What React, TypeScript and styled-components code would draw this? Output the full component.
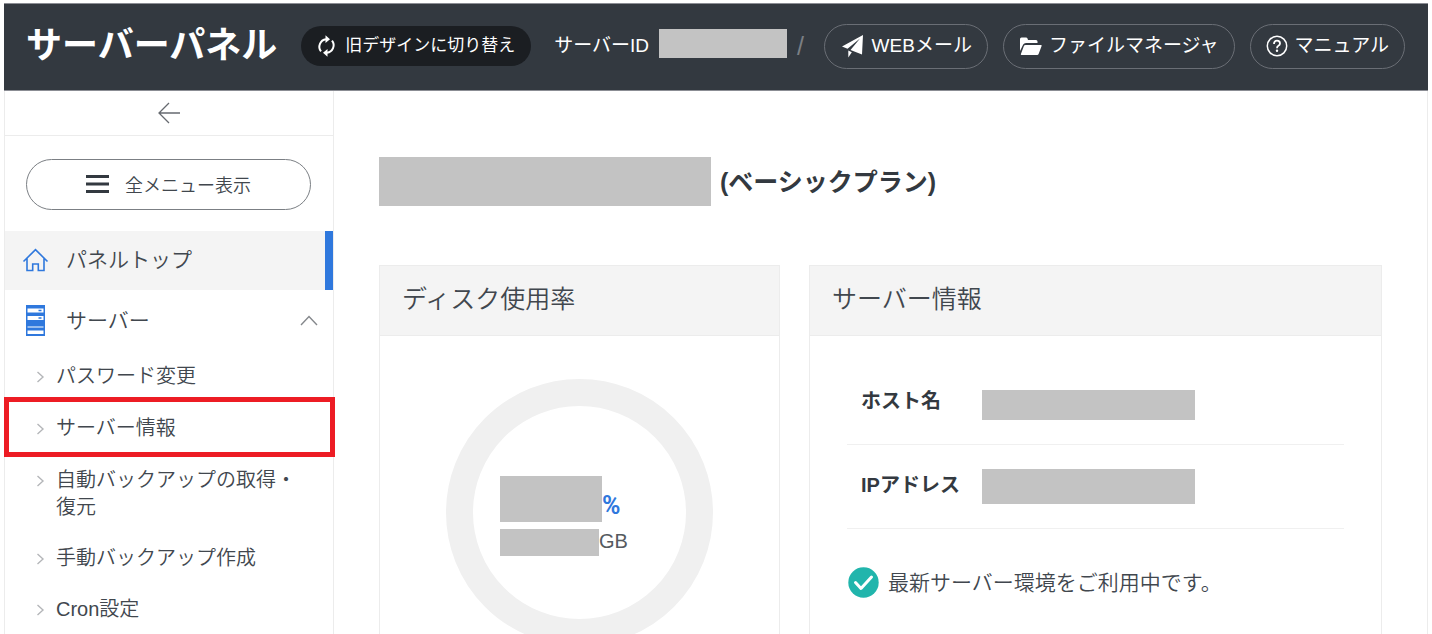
import React from "react";
import styled, { createGlobalStyle, css } from "styled-components";

const ink = "#333940";
const softInk = "#41474e";
const line = "#ececec";

const GlobalStyle = createGlobalStyle`
  *, *::before, *::after { box-sizing: border-box; }
  body {
    margin: 0;
    background: #fff;
    color: ${softInk};
    font-family: "Liberation Sans", "Noto Sans CJK JP", sans-serif;
    font-size: 20px;
    font-weight: 350;
  }
  button { font: inherit; color: inherit; cursor: pointer; }
  a { color: inherit; text-decoration: none; }
  h1, h2, p, ul { margin: 0; padding: 0; }
  ul { list-style: none; }
`;

const Page = styled.div`
  min-height: 100vh;
  padding: 3px 4px 0;
  display: flex;
  flex-direction: column;
`;

const Header = styled.header`
  min-height: 88px;
  display: flex;
  align-items: center;
  padding: 0 23px 2px 22px;
  background: #333940;
  border: 1px solid #8b8d94;
  border-width: 1px 0;
  color: #fff;
  font-size: 19px;
  line-height: 28px;
  font-weight: 400;
  white-space: nowrap;
`;

const Brand = styled.h1`
  font-size: 36px;
  line-height: 44px;
  font-weight: 700;
`;

const SwitchButton = styled.button`
  display: flex;
  align-items: center;
  gap: 9px;
  height: 40px;
  margin-left: 24px;
  padding: 0 16px;
  border: 0;
  border-radius: 20px;
  background: #1b1e22;
  font-size: 17px;
`;

const Mask = styled.span<{ $w: number; $h: number }>`
  display: block;
  flex: none;
  width: ${(p) => p.$w}px;
  height: ${(p) => p.$h}px;
  background: #c3c3c3;
`;

const ServerId = styled.div`
  display: flex;
  align-items: center;
  gap: 10px;
  margin-left: 23px;
  ${Mask} { margin-bottom: 5px; }
`;

const Slash = styled.span`
  color: #7b7f84;
  font-size: 25px;
`;

const HeaderNav = styled.nav`
  display: flex;
  gap: 15px;
  margin-left: auto;
`;

const HeaderLink = styled.a`
  display: flex;
  align-items: center;
  gap: 7px;
  height: 45px;
  padding: 0 15px;
  border: 1px solid #6a6e75;
  border-radius: 23px;
`;

const Body = styled.div`
  flex: 1;
  display: flex;
  border-right: 1px solid ${line};
`;

const Sidebar = styled.aside`
  flex: none;
  width: 330px;
  border: 1px solid ${line};
  border-width: 0 1px;
`;

const Collapse = styled.button`
  display: flex;
  align-items: center;
  justify-content: center;
  width: 100%;
  height: 45px;
  padding: 0;
  background: none;
  border: 0;
  border-bottom: 1px solid ${line};
`;

const AllMenu = styled.button`
  display: flex;
  align-items: center;
  justify-content: center;
  gap: 16px;
  width: calc(100% - 43px);
  height: 51px;
  margin: 23px 22px 21px 21px;
  padding: 0 0 2px;
  border: 1px solid #7b7f84;
  border-radius: 26px;
  background: #fff;
  font-size: 18px;
`;

const MenuItem = styled.a<{ $active?: boolean }>`
  display: flex;
  align-items: center;
  gap: 17px;
  height: ${(p) => (p.$active ? 59 : 61)}px;
  padding: 0 15px 0 17px;
  font-size: 21px;
  line-height: 32px;
  ${(p) =>
    p.$active &&
    css`
      padding-bottom: 2px;
      background: #f4f4f4;
      border-right: 8px solid #2f78dd;
    `}
  & > span { flex: 1; }
`;

const SubLink = styled.a`
  display: flex;
  gap: 11px;
  padding: 0 30px 0 31px;
  line-height: 27px;
  & > svg { flex: none; margin-top: 8px; }
`;

const SubItem = styled.li<{ $marked?: boolean }>`
  padding: 12px 0;
  ${(p) =>
    p.$marked &&
    css`
      margin: -5px -2px -2px -1px;
      padding: 13px 0 10px;
      border: 5px solid #ed1c24;
      & > ${SubLink} { padding-left: 27px; }
    `}
`;

const Main = styled.main`
  flex: 1;
  min-width: 0;
  padding: 66px 45px 0;
`;

const PlanTitle = styled.h2`
  display: flex;
  align-items: center;
  gap: 9px;
  color: ${ink};
  font-size: 25px;
  line-height: 36px;
  font-weight: 700;
`;

const Cards = styled.div`
  display: grid;
  grid-template-columns: 401fr 573fr;
  gap: 29px;
  margin-top: 59px;
`;

const Card = styled.section`
  border: 1px solid ${line};
`;

const CardTitle = styled.h2`
  height: 70px;
  padding: 0 22px;
  background: #f4f4f4;
  border-bottom: 1px solid ${line};
  font-size: 25px;
  line-height: 66px;
  font-weight: 350;
`;

const Ring = styled.div`
  width: 267px;
  height: 267px;
  margin: 43px auto 40px;
  padding: 70px 27px 0;
  border: 27px solid #f0f0f0;
  border-radius: 50%;
`;

const Percent = styled.p`
  display: flex;
  align-items: flex-end;
  margin-bottom: 7px;
  color: #2f78dd;
  font-family: Roboto, sans-serif;
  font-size: 25px;
  font-weight: 700;
  line-height: 32px;
`;

const Capacity = styled.p`
  display: flex;
  align-items: flex-start;
  color: #555a60;
  font-size: 20px;
  line-height: 24px;
`;

const InfoTable = styled.table`
  width: calc(100% - 74px);
  margin: 24px 37px 0;
  border-collapse: collapse;
  tr { height: 84px; border-bottom: 1px solid #f0f0f0; }
  th {
    width: 135px;
    padding: 0 0 5px 14px;
    color: ${ink};
    text-align: left;
    font-weight: 700;
    white-space: nowrap;
  }
  td { padding: 0; }
  tr:first-child td { padding-top: 6px; }
`;

const Status = styled.p`
  display: flex;
  align-items: center;
  gap: 9px;
  margin: 38px 38px 0;
  font-size: 21px;
  line-height: 32px;
`;

const Refresh = () => (
  <svg width="19" height="22" viewBox="0 0 19 22" fill="none" stroke="#fff" strokeWidth="2">
    <path d="M4 16.300A7.500 7.500 0 0 1 9 4.200M15 5.700A7.500 7.500 0 0 1 10 17.800" />
    <path d="M8.500 .3v7.800L13 4.200zM10.500 13.900v7.800L6 17.800z" fill="#fff" stroke="none" />
  </svg>
);

const Plane = () => (
  <svg width="25" height="24" viewBox="0 0 25 24" fill="#fff">
    <path d="M23 1 2 12.500l5.500 2.300L20 4.500 10.500 16 22 20.500z" />
    <path d="M8.300 16.500v7l3.500-5.200z" />
  </svg>
);

const Folder = () => (
  <svg width="23" height="19" viewBox="0 0 23 19" fill="#fff">
    <path d="M1 14V2q0-1.500 1.500-1.500H7q1 0 1.500 1L9 3h8q1.500 0 1.500 1.500V6H7Q5 6 4.200 7.500z" />
    <path d="M6.500 8H22q1 0 .6 1l-3 8q-.4 1-1.500 1H2.500q-1 0-.6-1l3-8q.4-1 1.600-1z" />
  </svg>
);

const Help = () => (
  <svg width="22" height="22" viewBox="0 0 22 22" fill="none" stroke="#fff" strokeWidth="1.500">
    <circle cx="11" cy="11" r="9.700" />
    <path d="M8 9q0-3.300 3-3.300T14 8.500q0 1.500-1.600 2.300Q11 11.500 11 13.200" strokeWidth="1.800" />
    <circle cx="11" cy="15.800" r="1.200" fill="#fff" stroke="none" />
  </svg>
);

const ArrowLeft = () => (
  <svg width="22" height="22" viewBox="0 0 22 22" fill="none" stroke="#666a70" strokeWidth="1.300">
    <path d="M11 1 1 11l10 10M1 11h21" />
  </svg>
);

const Bars = () => (
  <svg width="23" height="20" viewBox="0 0 23 20" fill={ink}>
    <path d="M0 1h23v3H0zM0 8.500h23v3H0zM0 16h23v3H0z" />
  </svg>
);

const House = () => (
  <svg width="27" height="24" viewBox="0 0 27 24" fill="none" stroke="#2f78dd" strokeWidth="1.600">
    <path d="M1.500 13.500 13.500 1.700l12 11.800M5 10.500v12h5.700V16h5.600v6.500H22v-12" />
  </svg>
);

const Rack = () => (
  <svg width="27" height="31" viewBox="0 0 27 31">
    <path fill="#2f78dd" d="M4 0h19v31H4z" />
    <path fill="#fff" d="M5.500 3.500h16v4h-16zM5.500 11h16v4h-16zM5.500 21.500h16v1h-16zM5.500 25.500h16v3.500h-16z" />
    <path stroke="#2f78dd" strokeWidth="1.400" d="M16.500 5.500h3M16.500 13h3" />
  </svg>
);

const ChevronUp = () => (
  <svg width="18" height="11" viewBox="0 0 18 11" fill="none" stroke="#85888c" strokeWidth="1.400">
    <path d="M1 10 9 1.500 17 10" />
  </svg>
);

const ChevronRight = () => (
  <svg width="9" height="12" viewBox="0 0 9 12" fill="none" stroke="#b4b6b9" strokeWidth="1.400">
    <path d="M1.500 1 7 6l-5.500 5" />
  </svg>
);

const Check = () => (
  <svg width="31" height="31" viewBox="0 0 31 31">
    <circle cx="15.500" cy="15.500" r="15.200" fill="#21b5ac" />
    <path d="m7.500 15.500 5.500 6L23.500 10" fill="none" stroke="#fff" strokeWidth="3" strokeLinecap="round" strokeLinejoin="round" />
  </svg>
);

const subItems = [
  { label: "パスワード変更" },
  { label: "サーバー情報", marked: true },
  { label: "自動バックアップの取得・復元" },
  { label: "手動バックアップ作成" },
  { label: "Cron設定" },
];

export default function App() {
  return (
    <Page>
      <GlobalStyle />
      <Header>
        <Brand>サーバーパネル</Brand>
        <SwitchButton type="button">
          <Refresh />
          旧デザインに切り替え
        </SwitchButton>
        <ServerId>
          サーバーID
          <Mask $w={128} $h={29} />
          <Slash>/</Slash>
        </ServerId>
        <HeaderNav>
          <HeaderLink href="#mail">
            <Plane />
            WEBメール
          </HeaderLink>
          <HeaderLink href="#files">
            <Folder />
            ファイルマネージャ
          </HeaderLink>
          <HeaderLink href="#manual">
            <Help />
            マニュアル
          </HeaderLink>
        </HeaderNav>
      </Header>
      <Body>
        <Sidebar>
          <Collapse type="button" aria-label="メニューを閉じる">
            <ArrowLeft />
          </Collapse>
          <AllMenu type="button">
            <Bars />
            全メニュー表示
          </AllMenu>
          <nav>
            <MenuItem href="#top" $active>
              <House />
              <span>パネルトップ</span>
            </MenuItem>
            <MenuItem href="#server">
              <Rack />
              <span>サーバー</span>
              <ChevronUp />
            </MenuItem>
            <ul>
              {subItems.map((item) => (
                <SubItem key={item.label} $marked={item.marked}>
                  <SubLink href="#server">
                    <ChevronRight />
                    {item.label}
                  </SubLink>
                </SubItem>
              ))}
            </ul>
          </nav>
        </Sidebar>
        <Main>
          <PlanTitle>
            <Mask $w={332} $h={49} />
            (ベーシックプラン)
          </PlanTitle>
          <Cards>
            <Card>
              <CardTitle>ディスク使用率</CardTitle>
              <Ring>
                <Percent>
                  <Mask $w={102} $h={46} />%
                </Percent>
                <Capacity>
                  <Mask $w={99} $h={27} />
                  GB
                </Capacity>
              </Ring>
            </Card>
            <Card>
              <CardTitle>サーバー情報</CardTitle>
              <InfoTable>
                <tbody>
                  <tr>
                    <th scope="row">ホスト名</th>
                    <td>
                      <Mask $w={213} $h={30} />
                    </td>
                  </tr>
                  <tr>
                    <th scope="row">IPアドレス</th>
                    <td>
                      <Mask $w={213} $h={35} />
                    </td>
                  </tr>
                </tbody>
              </InfoTable>
              <Status>
                <Check />
                最新サーバー環境をご利用中です。
              </Status>
            </Card>
          </Cards>
        </Main>
      </Body>
    </Page>
  );
}
